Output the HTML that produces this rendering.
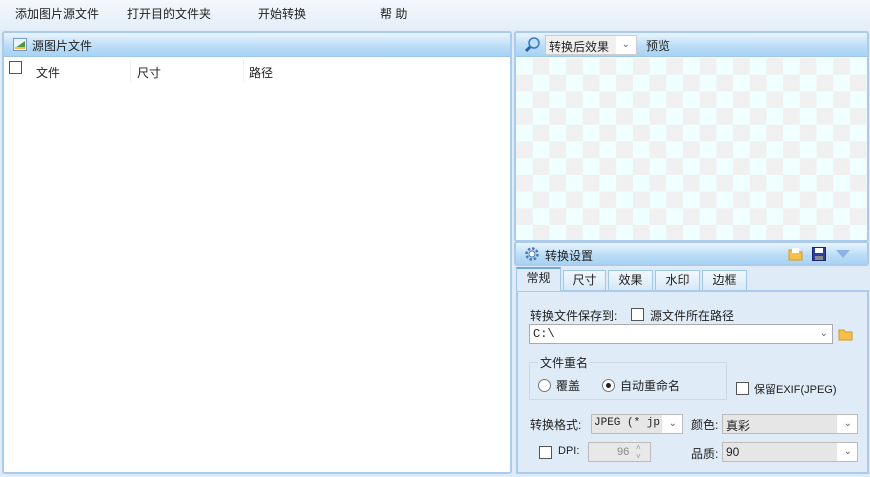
<!DOCTYPE html>
<html><head><meta charset="utf-8"><style>
*{margin:0;padding:0;box-sizing:border-box}
body{width:870px;height:477px;position:relative;overflow:hidden;background:#dfebf6;font-family:"Liberation Sans","Noto Sans CJK SC",sans-serif;font-size:12px;color:#222}
.a{position:absolute}
.menu{top:0;left:0;width:870px;height:30px;background:linear-gradient(#f4f8fc,#e3eef8)}
.menu span{position:absolute;top:5px;font-size:12px}
.panel{border:2px solid #aacbec;border-radius:3px;background:#fff}
.hdr{background:linear-gradient(#eaf4fd,#b9dcf6 60%,#a8d3f4);height:24px;border-bottom:1px solid #9cc6ea}
.chk{width:13px;height:13px;border:1px solid #555;background:#fff;position:absolute}
.cb{background:#fff;border:1px solid #aaa;position:absolute;height:20px}
.cbg{background:#e6e6e6;border:1px solid #bbb;position:absolute;height:20px}
.arr{position:absolute;right:4px;top:3px;font-size:10px;color:#666}
.tab{position:absolute;top:270px;height:20px;border:1px solid #9cc6ea;border-bottom:none;background:linear-gradient(#f2f8fd,#d7e8f6);text-align:center;line-height:18px;font-size:12px}
</style></head><body>
<div class="a menu">
<span style="left:15px">添加图片源文件</span>
<span style="left:127px">打开目的文件夹</span>
<span style="left:258px">开始转换</span>
<span style="left:380px">帮 助</span>
</div>

<!-- left panel -->
<div class="a panel" style="left:2px;top:31px;width:510px;height:443px">
 <div class="hdr" style="position:relative">
  <svg class="a" style="left:9px;top:5px" width="14" height="13"><rect x="0.5" y="0.5" width="13" height="12" fill="#eaf2ff" stroke="#7a9cc8"/><path d="M2 10 L12 3 L12 10Z" fill="#4a9a3a"/><rect x="2" y="9" width="10" height="2" fill="#f0c040"/></svg>
  <span class="a" style="left:28px;top:4px">源图片文件</span>
 </div>
 <div class="a" style="left:0;top:25px;width:506px;height:27px;background:#fff">
  <div class="chk" style="left:5px;top:3px"></div>
  <span class="a" style="left:32px;top:6px">文件</span>
  <div class="a" style="left:126px;top:2px;width:1px;height:22px;background:#eee"></div>
  <span class="a" style="left:133px;top:6px">尺寸</span>
  <div class="a" style="left:239px;top:2px;width:1px;height:22px;background:#eee"></div>
  <span class="a" style="left:245px;top:6px">路径</span>
 </div>
</div>

<!-- preview panel -->
<div class="a panel" style="left:514px;top:31px;width:355px;height:211px;overflow:hidden">
 <div class="hdr" style="position:relative">
  <svg class="a" style="left:8px;top:4px" width="16" height="16"><circle cx="10" cy="6" r="5" fill="#bfe0fb" stroke="#3a78c0" stroke-width="1.5"/><path d="M6 10 L2 14" stroke="#2a5ea8" stroke-width="3"/></svg>
  <div class="a" style="left:29px;top:2px;width:92px;height:20px;background:#f0f0f0;border:1px solid #ccc"><span class="a" style="left:3px;top:2px">转换后效果</span><div class="a" style="right:0;top:0;width:20px;height:18px;background:#fff"><span class="arr" style="right:6px">&#8964;</span></div></div>
  <span class="a" style="left:130px;top:4px">预览</span>
 </div>
 <div class="a" style="left:0;top:25px;width:351px;height:184px;background-color:#f0ffff;background-image:linear-gradient(45deg,#f0f0f0 25%,transparent 25%,transparent 75%,#f0f0f0 75%),linear-gradient(45deg,#f0f0f0 25%,transparent 25%,transparent 75%,#f0f0f0 75%);background-size:33.4px 33.4px;background-position:0 0,16.7px 16.7px"></div>
</div>

<!-- settings header -->
<div class="a hdr" style="left:514px;top:241px;width:355px;height:25px;border:2px solid #aacbec;border-radius:3px">
 <svg class="a" style="left:8px;top:3px" width="16" height="16"><circle cx="8" cy="8" r="5.5" fill="none" stroke="#4b77b0" stroke-width="2.5" stroke-dasharray="2.5 1.8"/><circle cx="8" cy="8" r="3" fill="#fff" stroke="#4b77b0"/></svg>
 <span class="a" style="left:29px;top:4px">转换设置</span>
 <svg class="a" style="left:272px;top:4px" width="15" height="14"><path d="M1 3h5l1 2h7v8H1z" fill="#f6c04a" stroke="#d39a20"/><rect x="4" y="1" width="7" height="5" fill="#fff"/></svg>
 <svg class="a" style="left:296px;top:4px" width="14" height="14"><rect x="0.5" y="0.5" width="13" height="13" fill="#2c3f9a" stroke="#1a2670"/><rect x="3" y="1" width="8" height="5" fill="#fff"/><rect x="3" y="9" width="8" height="4" fill="#8a8a8a"/></svg>
 <svg class="a" style="left:320px;top:7px" width="14" height="9"><path d="M0 0h14L7 8z" fill="#8ab4e6"/></svg>
</div>

<!-- tabs -->
<div class="tab" style="left:516px;top:267px;width:45px;height:24px;background:#dfebf6;border-top:2px solid #6aa8e6;z-index:2">常规</div>
<div class="tab" style="left:563px;width:43px">尺寸</div>
<div class="tab" style="left:608px;width:45px">效果</div>
<div class="tab" style="left:655px;width:45px">水印</div>
<div class="tab" style="left:702px;width:45px">边框</div>

<div class="a" style="left:516px;top:290px;width:353px;height:184px;border:2px solid #aacbec;background:#dfebf6">
 <span class="a" style="left:12px;top:15px">转换文件保存到:</span>
 <div class="chk" style="left:113px;top:16px"></div>
 <span class="a" style="left:132px;top:15px">源文件所在路径</span>
 <div class="cb" style="left:11px;top:32px;width:304px"><span class="a" style="left:3px;top:2px;font-family:'Liberation Mono',monospace">C:\</span><span class="arr">&#8964;</span></div>
 <svg class="a" style="left:320px;top:35px" width="15" height="14"><path d="M1 3h5l1 2h7v8H1z" fill="#f6c04a" stroke="#d39a20"/></svg>
 <div class="a" style="left:11px;top:70px;width:198px;height:38px;border:1px solid #ccd8e2"></div>
 <span class="a" style="left:20px;top:62px;background:#dfebf6;padding:0 2px">文件重名</span>
 <div class="a" style="left:20px;top:87px;width:13px;height:13px;border-radius:50%;border:1px solid #777;background:#fff"></div>
 <span class="a" style="left:38px;top:85px">覆盖</span>
 <div class="a" style="left:84px;top:87px;width:13px;height:13px;border-radius:50%;border:1px solid #777;background:#fff"><div class="a" style="left:3px;top:3px;width:5px;height:5px;border-radius:50%;background:#222"></div></div>
 <span class="a" style="left:102px;top:85px">自动重命名</span>
 <div class="chk" style="left:218px;top:90px"></div>
 <span class="a" style="left:236px;top:89px;font-size:11px">保留EXIF(JPEG)</span>
 <span class="a" style="left:12px;top:124px">转换格式:</span>
 <div class="cbg" style="left:73px;top:122px;width:92px"><span class="a" style="left:2px;top:2px;font-size:11px;font-family:'Liberation Mono',monospace">JPEG (* jp</span><div class="a" style="right:0;top:0;width:20px;height:18px;background:#fff"><span class="arr" style="right:5px">&#8964;</span></div></div>
 <span class="a" style="left:173px;top:124px">颜色:</span>
 <div class="cbg" style="left:204px;top:122px;width:136px"><span class="a" style="left:3px;top:2px">真彩</span><div class="a" style="right:0;top:0;width:20px;height:18px;background:#fff"><span class="arr" style="right:5px">&#8964;</span></div></div>
 <div class="chk" style="left:21px;top:154px"></div>
 <span class="a" style="left:40px;top:153px;font-size:11px">DPI:</span>
 <div class="cbg" style="left:70px;top:150px;width:63px;background:#e8e8e8"><span class="a" style="left:28px;top:3px;font-size:11px;color:#888">96</span><span class="a" style="left:47px;top:0;font-size:8px;color:#999;line-height:9px">&#708;<br>&#709;</span></div>
 <span class="a" style="left:173px;top:153px">品质:</span>
 <div class="cbg" style="left:204px;top:150px;width:136px"><span class="a" style="left:3px;top:2px">90</span><div class="a" style="right:0;top:0;width:20px;height:18px;background:#fff"><span class="arr" style="right:5px">&#8964;</span></div></div>
</div>
</body></html>
